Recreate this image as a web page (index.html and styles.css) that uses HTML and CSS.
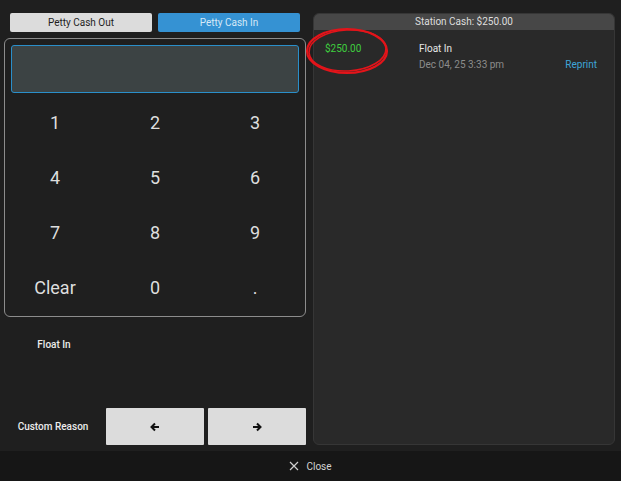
FILE: index.html
```html
<!DOCTYPE html>
<html>
<head>
<meta charset="utf-8">
<link rel="stylesheet" href="styles.css">
</head>
<body>
<div class="app">
  <div class="main">
    <div class="left">
      <div class="tabs">
        <button class="tab tab-out">Petty Cash Out</button>
        <button class="tab tab-in">Petty Cash In</button>
      </div>
      <div class="keypad">
        <div class="display"></div>
        <div class="keys">
          <div class="key">1</div><div class="key">2</div><div class="key">3</div>
          <div class="key">4</div><div class="key">5</div><div class="key">6</div>
          <div class="key">7</div><div class="key">8</div><div class="key">9</div>
          <div class="key">Clear</div><div class="key">0</div><div class="key">.</div>
        </div>
      </div>
      <div class="reasons">
        <div class="reason">Float In</div>
      </div>
      <div class="bottom">
        <div class="reason custom">Custom Reason</div>
        <button class="nav">
          <svg width="10" height="10" viewBox="0 0 10 10"><path d="M9 5H2M5 1.5L1.5 5L5 8.5" fill="none" stroke="#111" stroke-width="2"/></svg>
        </button>
        <button class="nav">
          <svg width="10" height="10" viewBox="0 0 10 10"><path d="M1 5H8M5 1.5L8.5 5L5 8.5" fill="none" stroke="#111" stroke-width="2"/></svg>
        </button>
      </div>
    </div>
    <div class="right">
      <div class="panel-head">Station Cash: $250.00</div>
      <div class="entry">
        <div class="amount">$250.00</div>
        <div class="info">
          <div class="title">Float In</div>
          <div class="meta"><span class="date">Dec 04, 25 3:33 pm</span><span class="reprint">Reprint</span></div>
        </div>
      </div>
    </div>
  </div>
  <div class="footer">
    <svg width="10" height="10" viewBox="0 0 10 10"><path d="M1 1L9 9M9 1L1 9" stroke="#cfcfcf" stroke-width="1.2"/></svg>
    <span>Close</span>
  </div>
  <svg class="circle" width="90" height="54" viewBox="0 0 90 54">
    <ellipse cx="45" cy="27" rx="40" ry="22" fill="none" stroke="#e3141a" stroke-width="2.2"/>
    <ellipse cx="45.5" cy="26.5" rx="38.5" ry="20.5" fill="none" stroke="#e3141a" stroke-width="1.6" transform="rotate(-3 45 27)"/>
  </svg>
</div>
</body>
</html>
```

FILE: styles.css
```css
html, body {
  margin: 0;
  padding: 0;
  background: #141414;
}
body {
  font-family: Roboto, "Liberation Sans", sans-serif;
  color: #e0e0e0;
}
.app {
  position: relative;
  width: 621px;
  height: 481px;
  display: flex;
  flex-direction: column;
  background: #1f1f1f;
  overflow: hidden;
}
.main {
  flex: 1;
  display: flex;
  gap: 7px;
  padding: 13px 6px 6px 4px;
  min-height: 0;
}
.left {
  width: 302px;
  display: flex;
  flex-direction: column;
}
.tabs {
  display: flex;
  gap: 6px;
  padding: 0 6px;
  height: 19px;
}
.tab {
  flex: 1;
  border: none;
  border-radius: 2px;
  font-family: inherit;
  font-size: 10px;
  padding: 0;
  cursor: pointer;
}
.tab-out {
  background: #dcdcdc;
  color: #1e1e1e;
}
.tab-in {
  background: #3592d3;
  color: #d6e9f7;
}
.keypad {
  margin-top: 6px;
  height: 279px;
  box-sizing: border-box;
  border: 1px solid #8c8c8c;
  border-radius: 6px;
  display: flex;
  flex-direction: column;
}
.display {
  margin: 6px 6px 0;
  height: 48px;
  box-sizing: border-box;
  background: #3c4344;
  border: 1px solid #2a8fca;
  border-radius: 3px;
}
.keys {
  margin-top: 2px;
  display: grid;
  grid-template-columns: repeat(3, 1fr);
  grid-template-rows: repeat(4, 55px);
}
.key {
  display: flex;
  align-items: center;
  justify-content: center;
  font-size: 18px;
  color: #dedede;
}
.reasons {
  flex: 1;
  padding-top: 22px;
}
.reason {
  width: 100px;
  text-align: center;
  font-size: 10px;
  font-weight: 500;
  color: #ececec;
}
.bottom {
  display: flex;
  align-items: center;
  gap: 4px;
  height: 37px;
}
.custom {
  width: 98px;
}
.nav {
  width: 98px;
  height: 37px;
  border: none;
  border-radius: 1px;
  background: #dcdcdc;
  display: flex;
  align-items: center;
  justify-content: center;
  padding: 0;
}
.right {
  flex: 1;
  box-sizing: border-box;
  background: #292929;
  border: 1px solid #363636;
  border-radius: 6px;
  overflow: hidden;
}
.panel-head {
  height: 16px;
  background: #474747;
  color: #dedede;
  font-size: 10px;
  text-align: center;
  line-height: 16px;
}
.entry {
  display: flex;
  padding: 12px 17px 0 11px;
}
.amount {
  width: 94px;
  color: #3fcf3f;
  font-size: 10px;
  line-height: 14px;
}
.info {
  flex: 1;
  font-size: 10px;
}
.title {
  color: #e6e6e6;
  line-height: 14px;
}
.meta {
  display: flex;
  justify-content: space-between;
  margin-top: 2px;
  line-height: 14px;
}
.date {
  color: #8c8c8c;
}
.reprint {
  color: #3ea6d8;
}
.footer {
  height: 30px;
  background: #161616;
  display: flex;
  align-items: center;
  justify-content: center;
  gap: 7px;
  font-size: 10px;
  color: #d4d4d4;
}
.circle {
  position: absolute;
  left: 302px;
  top: 24px;
}
```
